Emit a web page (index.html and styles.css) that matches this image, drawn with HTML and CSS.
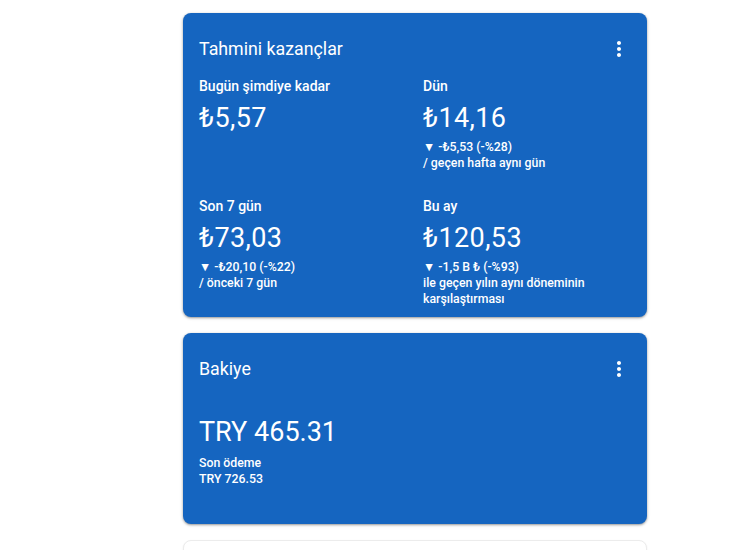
FILE: index.html
```html
<!DOCTYPE html>
<html lang="tr">
<head>
  <meta charset="UTF-8">
  <meta name="viewport" content="width=device-width, initial-scale=1.0">
  <title>Kazançlar</title>
  <link rel="stylesheet" href="styles.css">
</head>
<body>
  <div class="main">
    <div class="card card-blue">
      <div class="card-header">
        <h2 class="card-title">Tahmini kazançlar</h2>
        <button class="menu-btn" aria-label="Diğer">
          <svg viewBox="0 0 24 24" width="24" height="24"><path fill="#fff" d="M12 8c1.1 0 2-.9 2-2s-.9-2-2-2-2 .9-2 2 .9 2 2 2zm0 2c-1.1 0-2 .9-2 2s.9 2 2 2 2-.9 2-2-.9-2-2-2zm0 6c-1.1 0-2 .9-2 2s.9 2 2 2 2-.9 2-2-.9-2-2-2z"/></svg>
        </button>
      </div>
      <div class="stats">
        <div class="stat">
          <div class="stat-label">Bugün şimdiye kadar</div>
          <div class="stat-value">₺5,57</div>
        </div>
        <div class="stat">
          <div class="stat-label">Dün</div>
          <div class="stat-value">₺14,16</div>
          <div class="stat-delta">
            <div>▼ -₺5,53 (-%28)</div>
            <div>/ geçen hafta aynı gün</div>
          </div>
        </div>
        <div class="stat">
          <div class="stat-label">Son 7 gün</div>
          <div class="stat-value">₺73,03</div>
          <div class="stat-delta">
            <div>▼ -₺20,10 (-%22)</div>
            <div>/ önceki 7 gün</div>
          </div>
        </div>
        <div class="stat">
          <div class="stat-label">Bu ay</div>
          <div class="stat-value">₺120,53</div>
          <div class="stat-delta">
            <div>▼ -1,5 B ₺ (-%93)</div>
            <div>ile geçen yılın aynı döneminin karşılaştırması</div>
          </div>
        </div>
      </div>
    </div>

    <div class="card card-blue card-balance">
      <div class="card-header">
        <h2 class="card-title">Bakiye</h2>
        <button class="menu-btn" aria-label="Diğer">
          <svg viewBox="0 0 24 24" width="24" height="24"><path fill="#fff" d="M12 8c1.1 0 2-.9 2-2s-.9-2-2-2-2 .9-2 2 .9 2 2 2zm0 2c-1.1 0-2 .9-2 2s.9 2 2 2 2-.9 2-2-.9-2-2-2zm0 6c-1.1 0-2 .9-2 2s.9 2 2 2 2-.9 2-2-.9-2-2-2z"/></svg>
        </button>
      </div>
      <div class="balance-value">TRY 465.31</div>
      <div class="stat-delta">
        <div>Son ödeme</div>
        <div>TRY 726.53</div>
      </div>
    </div>

    <div class="card card-white"></div>
  </div>
</body>
</html>
```

FILE: styles.css
```css
body {
  margin: 0;
  font-family: Roboto, "Noto Sans", Arial, sans-serif;
  background-color: #fff;
}

.main {
  width: 464px;
  padding: 13px 0 0 183px;
}

.card {
  border-radius: 8px;
  margin-bottom: 16px;
  box-sizing: border-box;
}

.card-blue {
  background-color: #1565c0;
  color: #fff;
  padding: 23px 16px 10px;
  box-shadow: 0 1px 2px rgba(0, 0, 0, 0.3), 0 1px 3px 1px rgba(0, 0, 0, 0.1);
}

.card-white {
  height: 60px;
  background-color: #fff;
  border: 1px solid #ececec;
  box-shadow: 0 1px 2px rgba(0, 0, 0, 0.08);
}

.card-header {
  display: flex;
  align-items: center;
  justify-content: space-between;
  height: 26px;
}

.card-title {
  margin: 0;
  font-size: 17.8px;
  font-weight: 400;
  line-height: 24px;
}

.menu-btn {
  width: 24px;
  height: 24px;
  padding: 0;
  border: none;
  background: none;
  cursor: pointer;
}

.menu-btn svg {
  display: block;
}

.stats {
  display: grid;
  grid-template-columns: 1fr 1fr;
  column-gap: 16px;
  row-gap: 25px;
  margin-top: 14px;
}

.stat-label {
  font-size: 14px;
  font-weight: 500;
  line-height: 20px;
}

.stat-value {
  font-size: 27px;
  line-height: 32px;
  letter-spacing: 0.4px;
  margin-top: 6px;
}

.stat-delta {
  font-size: 12.3px;
  font-weight: 500;
  line-height: 16px;
  margin-top: 5px;
}

.card-balance {
  height: 191px;
}

.balance-value {
  font-size: 27px;
  line-height: 36px;
  margin-top: 32px;
}

.card-balance .stat-delta {
  margin-top: 5px;
}
```
